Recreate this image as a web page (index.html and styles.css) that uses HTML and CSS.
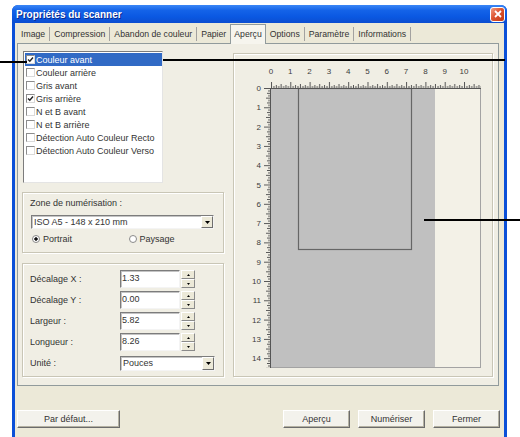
FILE: index.html
```html
<!DOCTYPE html>
<html lang="fr">
<head>
    <meta charset="UTF-8">
    <meta name="viewport" content="width=device-width, initial-scale=1.0">
    <title>Propriétés du scanner</title>
    <link rel="stylesheet" href="styles.css">
</head>
<body>
    <div class="window">
        <div class="titlebar">
            <span class="title">Propriétés du scanner</span>
            <span class="close"><svg width="8" height="8" viewBox="0 0 8 8"><path d="M1 1L7 7M7 1L1 7" stroke="#fff" stroke-width="1.8"/></svg></span>
        </div>
        <div class="client">
            <div class="tabs">
                <span class="tab">Image</span>
                <span class="tab">Compression</span>
                <span class="tab">Abandon de couleur</span>
                <span class="tab before-active">Papier</span>
                <span class="tab active">Aperçu</span>
                <span class="tab">Options</span>
                <span class="tab">Paramètre</span>
                <span class="tab">Informations</span>
            </div>
            <div class="panel">
                <div class="left">
                    <ul class="listbox">
                        <li class="selected"><span class="check"><svg width="7" height="7" viewBox="0 0 7 7"><path d="M1 3.5l1.8 1.8L6 1.5" fill="none" stroke="#222" stroke-width="1.4"/></svg></span>Couleur avant</li>
                        <li><span class="check"></span>Couleur arrière</li>
                        <li><span class="check"></span>Gris avant</li>
                        <li><span class="check"><svg width="7" height="7" viewBox="0 0 7 7"><path d="M1 3.5l1.8 1.8L6 1.5" fill="none" stroke="#222" stroke-width="1.4"/></svg></span>Gris arrière</li>
                        <li><span class="check"></span>N et B avant</li>
                        <li><span class="check"></span>N et B arrière</li>
                        <li><span class="check"></span>Détection Auto Couleur Recto</li>
                        <li><span class="check"></span>Détection Auto Couleur Verso</li>
                    </ul>

                    <div class="group zone">
                        <div class="caption">Zone de numérisation :</div>
                        <div class="combo wide">
                            <span class="value">ISO A5 - 148 x 210 mm</span>
                            <span class="drop"><svg width="5" height="3" viewBox="0 0 5 3"><path d="M0 0h5L2.5 3z" fill="#000"/></svg></span>
                        </div>
                        <div class="radios">
                            <span class="radio"><span class="dot on"></span>Portrait</span>
                            <span class="radio"><span class="dot"></span>Paysage</span>
                        </div>
                    </div>

                    <div class="group dims">
                        <div class="row">
                            <span class="lbl">Décalage X :</span>
                            <span class="field">1.33</span>
                            <span class="spin"><span><svg width="3" height="2" viewBox="0 0 3 2"><path d="M0 2h3L1.5 0z"/></svg></span><span><svg width="3" height="2" viewBox="0 0 3 2"><path d="M0 0h3L1.5 2z"/></svg></span></span>
                        </div>
                        <div class="row">
                            <span class="lbl">Décalage Y :</span>
                            <span class="field">0.00</span>
                            <span class="spin"><span><svg width="3" height="2" viewBox="0 0 3 2"><path d="M0 2h3L1.5 0z"/></svg></span><span><svg width="3" height="2" viewBox="0 0 3 2"><path d="M0 0h3L1.5 2z"/></svg></span></span>
                        </div>
                        <div class="row">
                            <span class="lbl">Largeur :</span>
                            <span class="field">5.82</span>
                            <span class="spin"><span><svg width="3" height="2" viewBox="0 0 3 2"><path d="M0 2h3L1.5 0z"/></svg></span><span><svg width="3" height="2" viewBox="0 0 3 2"><path d="M0 0h3L1.5 2z"/></svg></span></span>
                        </div>
                        <div class="row">
                            <span class="lbl">Longueur :</span>
                            <span class="field">8.26</span>
                            <span class="spin"><span><svg width="3" height="2" viewBox="0 0 3 2"><path d="M0 2h3L1.5 0z"/></svg></span><span><svg width="3" height="2" viewBox="0 0 3 2"><path d="M0 0h3L1.5 2z"/></svg></span></span>
                        </div>
                        <div class="row">
                            <span class="lbl">Unité :</span>
                            <div class="combo unit">
                                <span class="value">Pouces</span>
                                <span class="drop"><svg width="5" height="3" viewBox="0 0 5 3"><path d="M0 0h5L2.5 3z" fill="#000"/></svg></span>
                            </div>
                        </div>
                    </div>
                </div>

                <div class="group preview">
                    <svg class="bed" width="258" height="322" viewBox="0 0 258 322">
                        <defs>
                            <pattern id="ticks-x" x="36" y="27" width="19.3" height="6" patternUnits="userSpaceOnUse">
                                <path d="M0.5 0V6M10.1 2V6M5.3 3V6M15 3V6M2.9 4V6M7.7 4V6M12.6 4V6M17.4 4V6" stroke="#555" stroke-width="1"/>
                            </pattern>
                            <pattern id="ticks-y" x="29" y="33" width="6" height="19.3" patternUnits="userSpaceOnUse">
                                <path d="M0 0.5H6M2 10.1H6M3 5.3H6M3 15H6M4 2.9H6M4 7.7H6M4 12.6H6M4 17.4H6" stroke="#555" stroke-width="1"/>
                            </pattern>
                        </defs>
                        <!-- scanner glass frame -->
                        <rect x="35.5" y="33.5" width="210" height="279" fill="#f3f1e7" stroke="#a3a3a3"/>
                        <rect x="36" y="34" width="164" height="278" fill="#c0c0c0"/>
                        <!-- scan area -->
                        <rect x="63.5" y="33.5" width="113" height="161" fill="none" stroke="#666" stroke-width="1.2"/>
                        <!-- rulers -->
                        <rect x="36" y="27" width="210" height="6" fill="url(#ticks-x)"/>
                        <rect x="29" y="33" width="6" height="280" fill="url(#ticks-y)"/>
                        <path d="M35 33.5H246M35.5 33V313" stroke="#555" stroke-width="1"/>
                        <g class="nums-x" text-anchor="middle">
                            <text x="36" y="19">0</text>
                            <text x="55.3" y="19">1</text>
                            <text x="74.6" y="19">2</text>
                            <text x="93.9" y="19">3</text>
                            <text x="113.2" y="19">4</text>
                            <text x="132.5" y="19">5</text>
                            <text x="151.8" y="19">6</text>
                            <text x="171.1" y="19">7</text>
                            <text x="190.4" y="19">8</text>
                            <text x="209.7" y="19">9</text>
                            <text x="229" y="19">10</text>
                        </g>
                        <g class="nums-y" text-anchor="end">
                            <text x="26" y="36">0</text>
                            <text x="26" y="55.3">1</text>
                            <text x="26" y="74.6">2</text>
                            <text x="26" y="93.9">3</text>
                            <text x="26" y="113.2">4</text>
                            <text x="26" y="132.5">5</text>
                            <text x="26" y="151.8">6</text>
                            <text x="26" y="171.1">7</text>
                            <text x="26" y="190.4">8</text>
                            <text x="26" y="209.7">9</text>
                            <text x="26" y="229">10</text>
                            <text x="26" y="248.3">11</text>
                            <text x="26" y="267.6">12</text>
                            <text x="26" y="286.9">13</text>
                            <text x="26" y="306.2">14</text>
                        </g>
                    </svg>
                </div>
            </div>

            <div class="buttons">
                <button class="btn default">Par défaut...</button>
                <span class="spacer"></span>
                <button class="btn">Aperçu</button>
                <button class="btn">Numériser</button>
                <button class="btn">Fermer</button>
            </div>
        </div>
    </div>

    <!-- annotation lines drawn over the screenshot -->
    <div class="callout one"></div>
    <div class="callout two"></div>
    <div class="callout three"></div>
</body>
</html>
```

FILE: styles.css
```css
body, html {
    margin: 0;
    padding: 0;
    background-color: white;
    font-family: "Liberation Sans", Arial, sans-serif;
    font-size: 9px;
    color: #333;
}
.window {
    margin: 5px 0 0 12px;
    width: 495px;
    height: 432px;
    background-color: #0b50d8;
    display: flex;
    flex-direction: column;
    border-radius: 6px 6px 0 0;
}
.titlebar {
    height: 18px;
    display: flex;
    align-items: center;
    justify-content: space-between;
    padding: 0 2px 0 4px;
    background: linear-gradient(#3a86f6, #1463e8 30%, #0a58e2 65%, #0c4ed0);
    border-radius: 6px 6px 0 0;
}
.title {
    color: white;
    font-weight: bold;
    font-size: 10px;
    text-shadow: 1px 1px #0a2a8c;
}
.close {
    width: 15px;
    height: 15px;
    box-sizing: border-box;
    border: 1px solid white;
    border-radius: 3px;
    background: linear-gradient(135deg, #f29c82, #dd5430 45%, #c23a16);
    display: flex;
    align-items: center;
    justify-content: center;
}
.client {
    flex: 1;
    margin: 0 3px;
    padding: 0 5px 0 2px;
    background-color: #ece9d8;
}

/* tabs */
.tabs {
    display: flex;
    height: 20px;
    box-sizing: border-box;
    padding-top: 4px;
    font-size: 8.7px;
}
.tab {
    padding: 0 4px;
    height: 14px;
    line-height: 14px;
    border-right: 1px solid #a3a2a0;
}
.tab.before-active {
    border-right: none;
}
.tab.active {
    position: relative;
    z-index: 1;
    margin-top: -3px;
    height: 20px;
    line-height: 19px;
    padding: 0 3px;
    background-color: #f6f5ee;
    border: 1px solid #919b9c;
    border-bottom: none;
    box-sizing: border-box;
}
.panel {
    height: 343px;
    box-sizing: border-box;
    border: 1px solid #919b9c;
    background-color: #f0eee4;
    display: flex;
    gap: 9px;
    padding: 7px 0 0 4px;
}
.left {
    width: 202px;
    display: flex;
    flex-direction: column;
}

/* list of checkable outputs */
.listbox {
    list-style: none;
    margin: 0 0 0 1px;
    padding: 1px 0 0 1px;
    width: 140px;
    height: 132px;
    box-sizing: border-box;
    background-color: white;
    border: 1px solid;
    border-color: #7c7c7c #e4e4e4 #e4e4e4 #7c7c7c;
}
.listbox li {
    height: 13px;
    display: flex;
    align-items: center;
    white-space: nowrap;
}
.listbox li.selected {
    background-color: #316ac5;
    color: white;
}
.check {
    width: 9px;
    height: 9px;
    box-sizing: border-box;
    margin: 0 1px 0 1px;
    background-color: white;
    border: 1px solid;
    border-color: #8c8c8c #dadada #dadada #8c8c8c;
    display: flex;
    align-items: center;
    justify-content: center;
}

/* group boxes */
.group {
    box-sizing: border-box;
    border: 1px solid #c9c6b6;
    box-shadow: inset 1px 1px white, 1px 1px white;
}
.zone {
    margin-top: 9px;
    height: 61px;
    padding: 4px 0 0 7px;
}
.caption {
    height: 12px;
    line-height: 12px;
}
.combo {
    display: flex;
    box-sizing: border-box;
    background-color: white;
    border: 1px solid;
    border-color: #7c7c7c #f4f4f4 #f4f4f4 #7c7c7c;
    box-shadow: inset 1px 1px #c4c4c4;
}
.combo .value {
    flex: 1;
    padding-left: 2px;
    white-space: nowrap;
}
.combo .drop {
    width: 12px;
    box-sizing: border-box;
    background-color: #ece9d8;
    border: 1px solid;
    border-color: white #6e6e6e #6e6e6e white;
    display: flex;
    align-items: center;
    justify-content: center;
}
.combo.wide {
    margin: 6px 0 0 1px;
    width: 183px;
    height: 14px;
    line-height: 12px;
}
.combo.unit {
    width: 95px;
    height: 15px;
    line-height: 13px;
}
.radios {
    display: flex;
    margin-top: 4px;
    height: 12px;
}
.radio {
    width: 99px;
    display: flex;
    align-items: center;
}
.dot {
    width: 8px;
    height: 8px;
    box-sizing: border-box;
    margin: 0 3px 0 2px;
    border-radius: 50%;
    border: 1px solid #8a8a8a;
    background-color: white;
}
.dot.on {
    background: radial-gradient(circle, #111 1.4px, white 2px);
}
.dims {
    margin-top: 10px;
    height: 114px;
    padding: 6px 0 0 7px;
}
.row {
    display: flex;
    align-items: center;
    height: 18px;
    margin-bottom: 3px;
}
.lbl {
    width: 90px;
}
.field {
    width: 60px;
    height: 18px;
    box-sizing: border-box;
    padding-left: 1px;
    line-height: 14px;
    background-color: white;
    border: 1px solid;
    border-color: #7c7c7c #f4f4f4 #f4f4f4 #7c7c7c;
    box-shadow: inset 1px 1px #c4c4c4;
}
.spin {
    width: 14px;
    height: 18px;
    margin-left: 1px;
    display: flex;
    flex-direction: column;
}
.spin span {
    flex: 1;
    box-sizing: border-box;
    background-color: #ece9d8;
    border: 1px solid;
    border-color: white #8a8a8a #8a8a8a white;
    display: flex;
    align-items: center;
    justify-content: center;
}

/* preview */
.preview {
    width: 260px;
    height: 324px;
    margin-top: 2px;
    padding: 1px;
}
.bed {
    display: block;
}
.bed text {
    font-family: "Liberation Sans", Arial, sans-serif;
    font-size: 8px;
    fill: #3c3c3c;
}

/* bottom buttons */
.buttons {
    display: flex;
    gap: 8px;
    margin-top: 24px;
    margin-right: -1px;
}
.spacer {
    flex: 1;
}
.btn {
    width: 67px;
    height: 18px;
    padding: 0;
    font-family: inherit;
    font-size: 9px;
    color: #333;
    background-color: #f3f2ec;
    border: 1px solid;
    border-color: white #6b6b6b #6b6b6b white;
    box-shadow: inset -1px -1px #b4b1a2;
}
.btn.default {
    width: 103px;
}

.callout {
    position: absolute;
    height: 2px;
    background-color: black;
}
.callout.one {
    left: 0;
    top: 61px;
    width: 27px;
}
.callout.two {
    left: 163px;
    top: 59px;
    width: 342px;
}
.callout.three {
    left: 424px;
    top: 219px;
    width: 96px;
}
```
